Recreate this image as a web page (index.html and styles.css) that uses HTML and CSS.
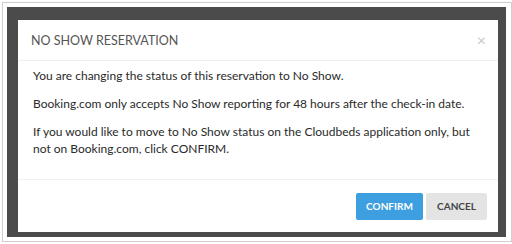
FILE: index.html
```html
<!DOCTYPE html>
<html lang="en">
<head>
    <meta charset="UTF-8">
    <title>No Show Reservation</title>
    <link rel="stylesheet" href="styles.css">
</head>
<body>

<div class="shot">
    <div class="backdrop">
        <div class="modal">
            <div class="modal-header">
                <h4>NO SHOW RESERVATION</h4>
                <span class="close">&times;</span>
            </div>
            <div class="modal-body">
                <p>You are changing the status of this reservation to No Show.</p>
                <p>Booking.com only accepts No Show reporting for 48 hours after the check-in date.</p>
                <p>If you would like to move to No Show status on the Cloudbeds application only, but not on Booking.com, click CONFIRM.</p>
            </div>
            <div class="modal-footer">
                <button class="btn btn-primary">CONFIRM</button>
                <button class="btn btn-default">CANCEL</button>
            </div>
        </div>
    </div>
</div>

</body>
</html>
```

FILE: styles.css
```css
/* screenshot frame */
body {
    margin: 0;
    background-color: #fff;
    font-family: Lato, "Open Sans", sans-serif;
}
.shot {
    width: 502px;
    height: 232px;
    margin: 2px 0 0 2px;
    padding: 4px 2px 2px 4px;
    border: 1px solid #cfcfcf;
    box-shadow: 1px 1px 2px rgba(0,0,0,0.2);
    box-sizing: content-box;
}
.backdrop {
    height: 230px;
    width: 499px;
    background-color: #4b4b4b;
    padding: 13px 8px 0 11px;
    box-sizing: border-box;
}
.modal {
    background-color: #fff;
    height: 212px;
    display: flex;
    flex-direction: column;
}
.modal-header {
    height: 41px;
    border-bottom: 1px solid #eee;
    display: flex;
    align-items: center;
    justify-content: space-between;
    padding: 0 12px 0 13px;
    box-sizing: border-box;
}
.modal-header h4 {
    margin: 0;
    font-size: 12.5px;
    font-weight: normal;
    color: #555;
}
.close {
    color: #c8c8c8;
    font-size: 16px;
    margin-top: -2px;
}
.modal-body {
    height: 119px;
    padding: 6px 10px 6px 15px;
    box-sizing: border-box;
    border-bottom: 1px solid #f0f0f0;
}
.modal-body p {
    margin: 0 0 11px 0;
    font-size: 12px;
    line-height: 17px;
    color: #2a2a2a;
}
.modal-footer {
    flex: 1;
    display: flex;
    justify-content: flex-end;
    align-items: center;
    gap: 3px;
    padding: 0 11px 0 0;
}
.btn {
    height: 27px;
    border: none;
    border-radius: 2px;
    font-family: inherit;
    font-size: 10px;
    font-weight: bold;
    padding: 0 10px;
}
.btn-primary {
    width: 67px;
    background-color: #3d9ee0;
    color: #fff;
}
.btn-default {
    width: 61px;
    background-color: #e4e4e4;
    color: #444;
}
```
